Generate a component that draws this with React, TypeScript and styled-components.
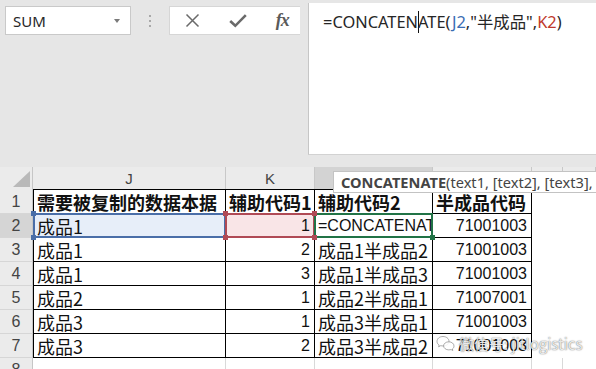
import React from "react";
import styled, { createGlobalStyle, css } from "styled-components";

const Global = createGlobalStyle`
  html, body { margin: 0; padding: 0; background: #ffffff; }
  body { width: 596px; height: 369px; overflow: hidden; }
`;

const Page = styled.div`
  position: relative;
  width: 596px;
  height: 369px;
  overflow: hidden;
  background: #ffffff;
  font-family: "Noto Sans", "Noto Sans CJK SC", sans-serif;
`;

/* ---------- formula bar ---------- */

const TopBar = styled.div`
  display: flex;
  height: 167px;
  box-sizing: border-box;
  padding-top: 3px;
  background: #e6e6e6;
`;

const Controls = styled.div`
  flex: none;
  width: 308px;
  box-sizing: border-box;
  padding: 3px 0 0 5px;
  display: flex;
  align-items: flex-start;
`;

const NameBox = styled.div`
  width: 126px;
  height: 29px;
  box-sizing: border-box;
  background: #ffffff;
  border: 1px solid #c9c9c9;
  display: flex;
  align-items: center;
  justify-content: space-between;
  padding: 0 10px 0 7px;
  font-size: 15px;
  color: #262626;
`;

const Caret = styled.span`
  width: 0;
  height: 0;
  border-left: 3.5px solid transparent;
  border-right: 3.5px solid transparent;
  border-top: 4px solid #7a7a7a;
`;

const Grip = styled.div`
  width: 38px;
  height: 29px;
  display: flex;
  flex-direction: column;
  align-items: center;
  justify-content: center;
  gap: 3px;
`;

const GripDot = styled.span`
  width: 2px;
  height: 2px;
  background: #a8a8a8;
`;

const ButtonBox = styled.div`
  width: 131px;
  height: 29px;
  box-sizing: border-box;
  background: #ffffff;
  border: 1px solid #d6d6d6;
  border-right: none;
  display: flex;
`;

const BarButton = styled.div<{ $w: number }>`
  width: ${(p) => p.$w}px;
  display: flex;
  align-items: center;
  justify-content: center;
  color: #6a6a6a;
`;

const Fx = styled.span`
  font-family: "Liberation Serif", "DejaVu Serif", serif;
  font-style: italic;
  font-weight: 700;
  font-size: 18px;
  color: #5a5a5a;
  letter-spacing: -1px;
  margin-left: 4px;
`;

const FormulaArea = styled.div`
  flex: 1;
  height: 152px;
  box-sizing: border-box;
  background: #ffffff;
  border-left: 1px solid #c6c6c6;
  border-bottom: 1px solid #d2d2d2;
  padding: 8px 0 0 14px;
  font-size: 16.4px;
  line-height: 22px;
  color: #262626;
  white-space: nowrap;
`;

const Ref = styled.span<{ $c: string }>`
  color: ${(p) => p.$c};
`;

const TextCursor = styled.span`
  display: inline-block;
  width: 1px;
  height: 22px;
  margin: 0 -1px 0 0;
  background: #111111;
  vertical-align: -5px;
`;

/* ---------- grid ---------- */

const COLS = "33px 193px 89px 118px 99px 31px 1fr";

const Row = styled.div<{ $h: number }>`
  display: grid;
  grid-template-columns: ${COLS};
  height: ${(p) => p.$h}px;
`;

const Corner = styled.div`
  background: #ebebeb;
  border-right: 1px solid #c6c6c6;
  box-sizing: border-box;
  display: flex;
  align-items: flex-end;
  justify-content: flex-end;
  padding: 0 2px 2px 0;
`;

const CornerTriangle = styled.span`
  width: 0;
  height: 0;
  border-left: 17px solid transparent;
  border-bottom: 16px solid #b9b9b9;
`;

const ColHead = styled.div<{ $active?: boolean }>`
  box-sizing: border-box;
  background: ${(p) => (p.$active ? "#d3d3d3" : "#ebebeb")};
  border-right: 1px solid #c8c8c8;
  display: flex;
  align-items: center;
  justify-content: center;
  font-family: "Liberation Sans", Arial, sans-serif;
  font-size: 15px;
  color: #444444;
`;

const RowHead = styled.div<{ $active?: boolean }>`
  box-sizing: border-box;
  background: ${(p) => (p.$active ? "#d5d5d5" : "#ebebeb")};
  border-right: 1px solid #c6c6c6;
  border-bottom: 1px solid #d6d6d6;
  display: flex;
  align-items: center;
  justify-content: center;
  font-family: "Liberation Sans", Arial, sans-serif;
  font-size: 16px;
  color: #444444;
  padding-top: 1px;
`;

type Hl = "blue" | "red" | "green";

const HL: Record<Hl, { line: string; fill: string }> = {
  blue: { line: "#4a6ea8", fill: "#e7eef9" },
  red: { line: "#b04a55", fill: "#f9e5e7" },
  green: { line: "#217346", fill: "#ffffff" },
};

const Cell = styled.div<{
  $right?: boolean;
  $bold?: boolean;
  $num?: boolean;
  $top?: boolean;
  $left?: boolean;
  $hl?: Hl;
}>`
  position: relative;
  box-sizing: border-box;
  min-width: 0;
  overflow: visible;
  white-space: nowrap;
  display: flex;
  align-items: center;
  justify-content: ${(p) => (p.$right ? "flex-end" : "flex-start")};
  padding: ${(p) => (p.$right ? "1px 4px 0 0" : "1px 0 0 3px")};
  background: ${(p) => (p.$hl ? HL[p.$hl].fill : "#ffffff")};
  border-right: 1px solid #000000;
  border-bottom: 1px solid #000000;
  ${(p) => p.$top && "border-top: 1px solid #000000;"}
  ${(p) => p.$left && "border-left: 1px solid #000000;"}
  color: #111111;
  font-family: ${(p) =>
    p.$num
      ? `"Liberation Sans", Arial, sans-serif`
      : `"Noto Sans CJK SC", "Noto Sans", sans-serif`};
  font-size: ${(p) => (p.$num ? "16px" : "18px")};
  font-weight: ${(p) => (p.$bold ? 700 : 400)};
  line-height: 22px;
  ${(p) =>
    p.$hl &&
    css`
      &::after {
        content: "";
        position: absolute;
        top: -1px;
        left: -1px;
        right: -1px;
        bottom: -1px;
        border: 2px solid ${HL[p.$hl].line};
        pointer-events: none;
        z-index: 1;
      }
    `}
`;

const Clip = styled.span`
  overflow: hidden;
  display: block;
  width: 100%;
`;

const Handle = styled.span<{ $c: string; $x: "l" | "r"; $y: "t" | "b" }>`
  position: absolute;
  z-index: 2;
  width: 5px;
  height: 5px;
  background: ${(p) => p.$c};
  ${(p) => (p.$x === "l" ? "left: -3px;" : "right: -3px;")}
  ${(p) => (p.$y === "t" ? "top: -3px;" : "bottom: -3px;")}
`;

const Blank = styled.div<{ $grid?: boolean }>`
  box-sizing: border-box;
  background: #ffffff;
  ${(p) => p.$grid && "border-right: 1px solid #d9d9d9;"}
`;

/* ---------- overlays ---------- */

const Tooltip = styled.div`
  position: absolute;
  left: 333px;
  top: 171px;
  width: 290px;
  height: 22px;
  box-sizing: border-box;
  background: #ffffff;
  border: 1px solid #c3c3c3;
  padding: 0 0 0 7px;
  display: flex;
  align-items: center;
  white-space: nowrap;
  font-family: "Noto Sans", sans-serif;
  font-size: 14.6px;
  color: #444444;
  z-index: 5;
`;

const TipBold = styled.b`
  font-weight: 700;
`;

const Watermark = styled.div`
  position: absolute;
  left: 436px;
  top: 333px;
  display: flex;
  align-items: center;
  gap: 4px;
  z-index: 6;
  font-family: "Noto Sans CJK SC", "Noto Sans", sans-serif;
  font-size: 15px;
  color: rgba(255, 255, 255, 0.85);
  text-shadow: 0 0 1px rgba(0, 0, 0, 0.55), 0 0 2px rgba(0, 0, 0, 0.25);
  white-space: nowrap;
`;

/* ---------- data ---------- */

const rows: string[][] = [
  ["需要被复制的数据本据", "辅助代码1", "辅助代码2", "半成品代码"],
  ["成品1", "1", "=CONCATENAT", "71001003"],
  ["成品1", "2", "成品1半成品2", "71001003"],
  ["成品1", "3", "成品1半成品3", "71001003"],
  ["成品2", "1", "成品2半成品1", "71007001"],
  ["成品3", "1", "成品3半成品1", "71001003"],
  ["成品3", "2", "成品3半成品2", "71001003"],
];

const CloseIcon = () => (
  <svg width="15" height="15" viewBox="0 0 15 15">
    <path d="M1.5 1.5 L13.5 13.5 M13.5 1.5 L1.5 13.5" stroke="#6a6a6a" strokeWidth="1.5" fill="none" />
  </svg>
);

const CheckIcon = () => (
  <svg width="18" height="15" viewBox="0 0 18 15">
    <path d="M1.2 8 L6.3 12.8 L16.8 2.2" stroke="#6a6a6a" strokeWidth="2.6" fill="none" strokeLinejoin="miter" />
  </svg>
);

const WeChatIcon = () => (
  <svg width="19" height="17" viewBox="0 0 19 17">
    <g fill="rgba(255,255,255,0.85)" stroke="rgba(90,90,90,0.55)" strokeWidth="0.9">
      <path d="M7 1.5 C3.4 1.5 1 3.8 1 6.4 C1 7.9 1.8 9.2 3.1 10 L2.6 11.8 L4.7 10.7 C5.4 10.9 6.2 11 7 11 C10.4 11 13 8.9 13 6.3 C13 3.7 10.4 1.5 7 1.5 Z" />
      <path d="M12.8 6.8 C15.8 6.8 18 8.7 18 11 C18 12.2 17.4 13.3 16.4 14 L16.8 15.5 L15.1 14.6 C14.4 14.8 13.6 14.9 12.8 14.9 C9.9 14.9 7.6 13.1 7.6 10.9 C7.6 8.6 9.9 6.8 12.8 6.8 Z" />
    </g>
  </svg>
);

export default function App() {
  return (
    <Page>
      <Global />
      <TopBar>
        <Controls>
          <NameBox>
            SUM
            <Caret />
          </NameBox>
          <Grip>
            <GripDot />
            <GripDot />
            <GripDot />
          </Grip>
          <ButtonBox>
            <BarButton $w={46}>
              <CloseIcon />
            </BarButton>
            <BarButton $w={45}>
              <CheckIcon />
            </BarButton>
            <BarButton $w={40}>
              <Fx>fx</Fx>
            </BarButton>
          </ButtonBox>
        </Controls>
        <FormulaArea>
          =CONCATEN
          <TextCursor />
          ATE(<Ref $c="#3b6db3">J2</Ref>,"半成品",<Ref $c="#c0392b">K2</Ref>)
        </FormulaArea>
      </TopBar>

      <Row $h={22}>
        <Corner>
          <CornerTriangle />
        </Corner>
        <ColHead>J</ColHead>
        <ColHead>K</ColHead>
        <ColHead $active>L</ColHead>
        <ColHead>M</ColHead>
        <ColHead>N</ColHead>
        <ColHead>O</ColHead>
      </Row>

      {rows.map((r, i) => {
        const n = i + 1;
        const header = i === 0;
        const sel = n === 2;
        return (
          <Row key={n} $h={header ? 25 : 24}>
            <RowHead $active={sel}>{n}</RowHead>
            <Cell $left $top={header} $bold={header} $hl={sel ? "blue" : undefined}>
              {r[0]}
              {sel && (
                <>
                  <Handle $c={HL.blue.line} $x="l" $y="t" />
                  <Handle $c={HL.blue.line} $x="l" $y="b" />
                </>
              )}
            </Cell>
            <Cell
              $top={header}
              $bold={header}
              $right={!header}
              $num={!header}
              $hl={sel ? "red" : undefined}
            >
              {r[1]}
              {sel && (
                <>
                  <Handle $c={HL.red.line} $x="l" $y="t" />
                  <Handle $c={HL.red.line} $x="l" $y="b" />
                  <Handle $c={HL.red.line} $x="r" $y="t" />
                  <Handle $c={HL.red.line} $x="r" $y="b" />
                </>
              )}
            </Cell>
            <Cell
              $top={header}
              $bold={header}
              $num={sel}
              $hl={sel ? "green" : undefined}
            >
              {sel ? <Clip>{r[2]}</Clip> : r[2]}
              {sel && <Handle $c={HL.green.line} $x="r" $y="b" />}
            </Cell>
            <Cell $top={header} $bold={header} $right={!header} $num={!header}>
              {r[3]}
            </Cell>
            <Blank />
            <Blank />
          </Row>
        );
      })}

      <Row $h={24}>
        <RowHead>8</RowHead>
        <Blank $grid />
        <Blank $grid />
        <Blank $grid />
        <Blank $grid />
        <Blank $grid />
        <Blank />
      </Row>

      <Tooltip>
        <TipBold>CONCATENATE</TipBold>(text1, [text2], [text3], ...)
      </Tooltip>

      <Watermark>
        <WeChatIcon />
        微信号: jitlogistics
      </Watermark>
    </Page>
  );
}
